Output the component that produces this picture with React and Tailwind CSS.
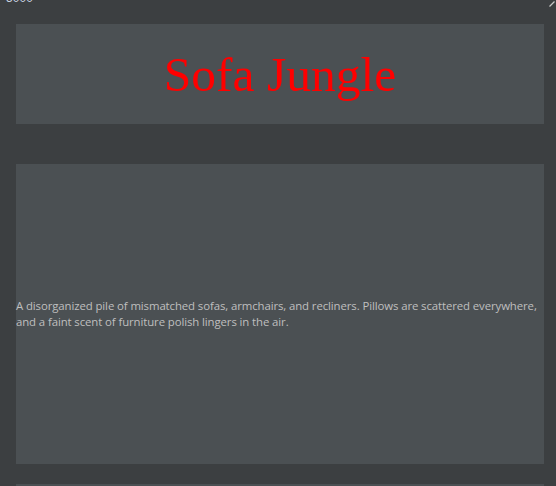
export default function App() {
  return (
    <div className="relative w-[556px] h-[486px] overflow-hidden bg-[#3c3f41]">
      <div className="absolute top-[-8px] left-[-5px] text-[12px] leading-none text-[#c9d3e0] font-['Liberation_Sans',sans-serif]">P 5000</div>
      <svg className="absolute top-[1px] right-[1px]" width="6" height="6" viewBox="0 0 6 6">
        <path d="M0.5 5.5 L5.5 0.5" stroke="#c8c8c8" strokeWidth="1.2" />
      </svg>
      <div className="flex flex-col pl-4 pr-3 pt-6 gap-10">
        <div className="h-[100px] bg-[#4b5053] flex items-center justify-center">
          <h1 className="text-[49.5px] leading-none text-[#ff0000] font-['Liberation_Serif',serif] pt-[2px]">Sofa Jungle</h1>
        </div>
        <div className="h-[300px] bg-[#4b5053] flex items-center">
          <p className="text-[11.4px] leading-4 text-[#bfbfbf] font-['Open_Sans',sans-serif] tracking-[-0.1px]">
            A disorganized pile of mismatched sofas, armchairs, and recliners. Pillows are scattered everywhere, and a faint scent of furniture polish lingers in the air.
          </p>
        </div>
        <div className="h-[100px] bg-[#4b5053] -mt-5"></div>
      </div>
    </div>
  );
}
